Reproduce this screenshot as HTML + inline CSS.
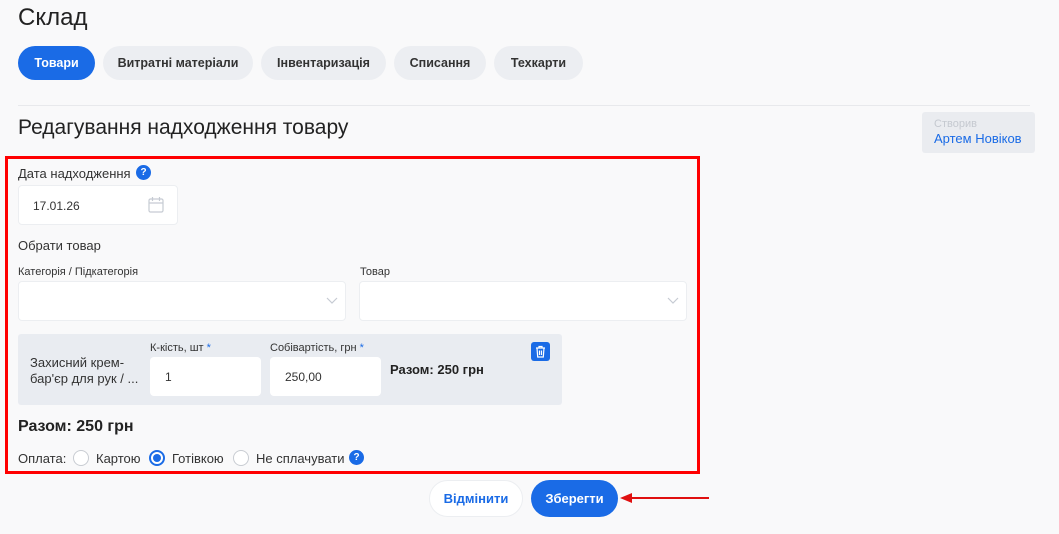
<!DOCTYPE html>
<html><head><meta charset="utf-8"><style>
*{box-sizing:border-box;margin:0;padding:0}
body{width:1059px;height:534px;background:#f9f9fa;font-family:"Liberation Sans",sans-serif;color:#222;position:relative;overflow:hidden}
.a{position:absolute}
.tab{position:absolute;top:46px;height:34px;border-radius:17px;background:#eceef2;font-size:12.5px;font-weight:bold;color:#333;display:flex;align-items:center;justify-content:center}
.inp{position:absolute;background:#fff;border:1px solid #eceef1;border-radius:4px}
.lbl{position:absolute;font-size:11px;color:#333}
.radio{position:absolute;width:16px;height:16px;border:1px solid #c8ccd2;border-radius:50%;background:#fff}
.q{position:absolute;width:15px;height:15px;border-radius:50%;background:#1a6be6;color:#fff;font-size:10px;font-weight:bold;text-align:center;line-height:15px}
</style></head><body>
<div class="a" style="left:18px;top:4px;font-size:24px;color:#222">Склад</div>
<div class="tab" style="left:18px;width:77px;background:#1a6be6;color:#fff">Товари</div>
<div class="tab" style="left:103px;width:150px">Витратні матеріали</div>
<div class="tab" style="left:261px;width:125px">Інвентаризація</div>
<div class="tab" style="left:394px;width:92px">Списання</div>
<div class="tab" style="left:494px;width:89px">Техкарти</div>
<div class="a" style="left:18px;top:105px;width:1012px;height:1px;background:#e8e9ec"></div>
<div class="a" style="left:18px;top:116px;font-size:21px;color:#222">Редагування надходження товару</div>
<div class="a" style="left:922px;top:112px;width:113px;height:41px;background:#eaecf0;border-radius:3px;padding:6px 0 0 12px">
<div style="font-size:11px;color:#c5c9d0">Створив</div>
<div style="font-size:13px;color:#1a6be6;margin-top:1px">Артем Новіков</div></div>

<div class="a" style="left:5px;top:156px;width:695px;height:318px;border:3px solid #f00"></div>
<div class="a" style="left:18px;top:166px;font-size:13px;color:#333">Дата надходження</div>
<div class="q" style="left:136px;top:165px">?</div>
<div class="inp" style="left:18px;top:185px;width:160px;height:40px"><span class="a" style="left:14px;top:13px;font-size:12px;color:#333">17.01.26</span>
<svg class="a" style="left:129px;top:10px" width="16" height="17" viewBox="0 0 16 17" fill="none" stroke="#c6cbd3" stroke-width="1.2"><rect x="1" y="3" width="14" height="13" rx="1.5"/><path d="M1 7h14M4.5 1v4M11.5 1v4"/></svg></div>
<div class="a" style="left:18px;top:238px;font-size:13px;color:#333">Обрати товар</div>
<div class="lbl" style="left:18px;top:266px">Категорія / Підкатегорія</div>
<div class="lbl" style="left:360px;top:266px">Товар</div>
<div class="inp" style="left:18px;top:281px;width:328px;height:40px"><svg class="a" style="left:307px;top:15px" width="12" height="8" viewBox="0 0 12 8" fill="none" stroke="#c6cbd3" stroke-width="1.2"><path d="M1 1l5 5 5-5"/></svg></div>
<div class="inp" style="left:359px;top:281px;width:328px;height:40px"><svg class="a" style="left:307px;top:15px" width="12" height="8" viewBox="0 0 12 8" fill="none" stroke="#c6cbd3" stroke-width="1.2"><path d="M1 1l5 5 5-5"/></svg></div>

<div class="a" style="left:18px;top:334px;width:544px;height:71px;background:#e9ecf1;border-radius:3px"></div>
<div class="a" style="left:30px;top:355px;font-size:13px;line-height:16px;color:#333">Захисний крем-<br>бар'єр для рук / ...</div>
<div class="lbl" style="left:150px;top:342px">К-кість, шт <span style="color:#1a6be6">*</span></div>
<div class="lbl" style="left:270px;top:342px">Собівартість, грн <span style="color:#1a6be6">*</span></div>
<div class="inp" style="left:150px;top:357px;width:111px;height:39px;border:none"><span class="a" style="left:15px;top:13px;font-size:12px;color:#333">1</span></div>
<div class="inp" style="left:270px;top:357px;width:111px;height:39px;border:none"><span class="a" style="left:15px;top:13px;font-size:12px;color:#333">250,00</span></div>
<div class="a" style="left:390px;top:362px;font-size:13px;font-weight:bold;color:#222">Разом: 250 грн</div>
<div class="a" style="left:531px;top:342px;width:19px;height:19px;background:#1a6be6;border-radius:3px">
<svg class="a" style="left:4px;top:3px" width="11" height="13" viewBox="0 0 11 13" fill="none" stroke="#fff" stroke-width="1.2"><path d="M1 3h9M4 3V1.5h3V3M2 3l.7 9h5.6L9 3M4.5 5.5v4.5M6.5 5.5v4.5"/></svg></div>

<div class="a" style="left:18px;top:418px;font-size:16px;font-weight:bold;color:#222">Разом: 250 грн</div>
<div class="a" style="left:18px;top:451px;font-size:13px;color:#333">Оплата:</div>
<div class="radio" style="left:73px;top:450px"></div>
<div class="a" style="left:96px;top:451px;font-size:13px;color:#333">Картою</div>
<div class="radio" style="left:149px;top:450px;border:2px solid #1a6be6"><div style="position:absolute;left:2px;top:2px;width:8px;height:8px;border-radius:50%;background:#1a6be6"></div></div>
<div class="a" style="left:172px;top:451px;font-size:13px;color:#333">Готівкою</div>
<div class="radio" style="left:233px;top:450px"></div>
<div class="a" style="left:256px;top:451px;font-size:13px;color:#333">Не сплачувати</div>
<div class="q" style="left:349px;top:450px">?</div>

<div class="a" style="left:429px;top:480px;width:94px;height:37px;border-radius:19px;background:#fff;border:1px solid #eceef1;color:#1a6be6;font-size:13px;font-weight:bold;display:flex;align-items:center;justify-content:center">Відмінити</div>
<div class="a" style="left:531px;top:480px;width:87px;height:37px;border-radius:19px;background:#1a6be6;color:#fff;font-size:13px;font-weight:bold;display:flex;align-items:center;justify-content:center">Зберегти</div>
<svg class="a" style="left:618px;top:491px" width="92" height="14" viewBox="0 0 92 14"><path d="M10 7H91" stroke="#e01010" stroke-width="2"/><path d="M2 7l12-5v10z" fill="#e01010"/></svg>
</body></html>
